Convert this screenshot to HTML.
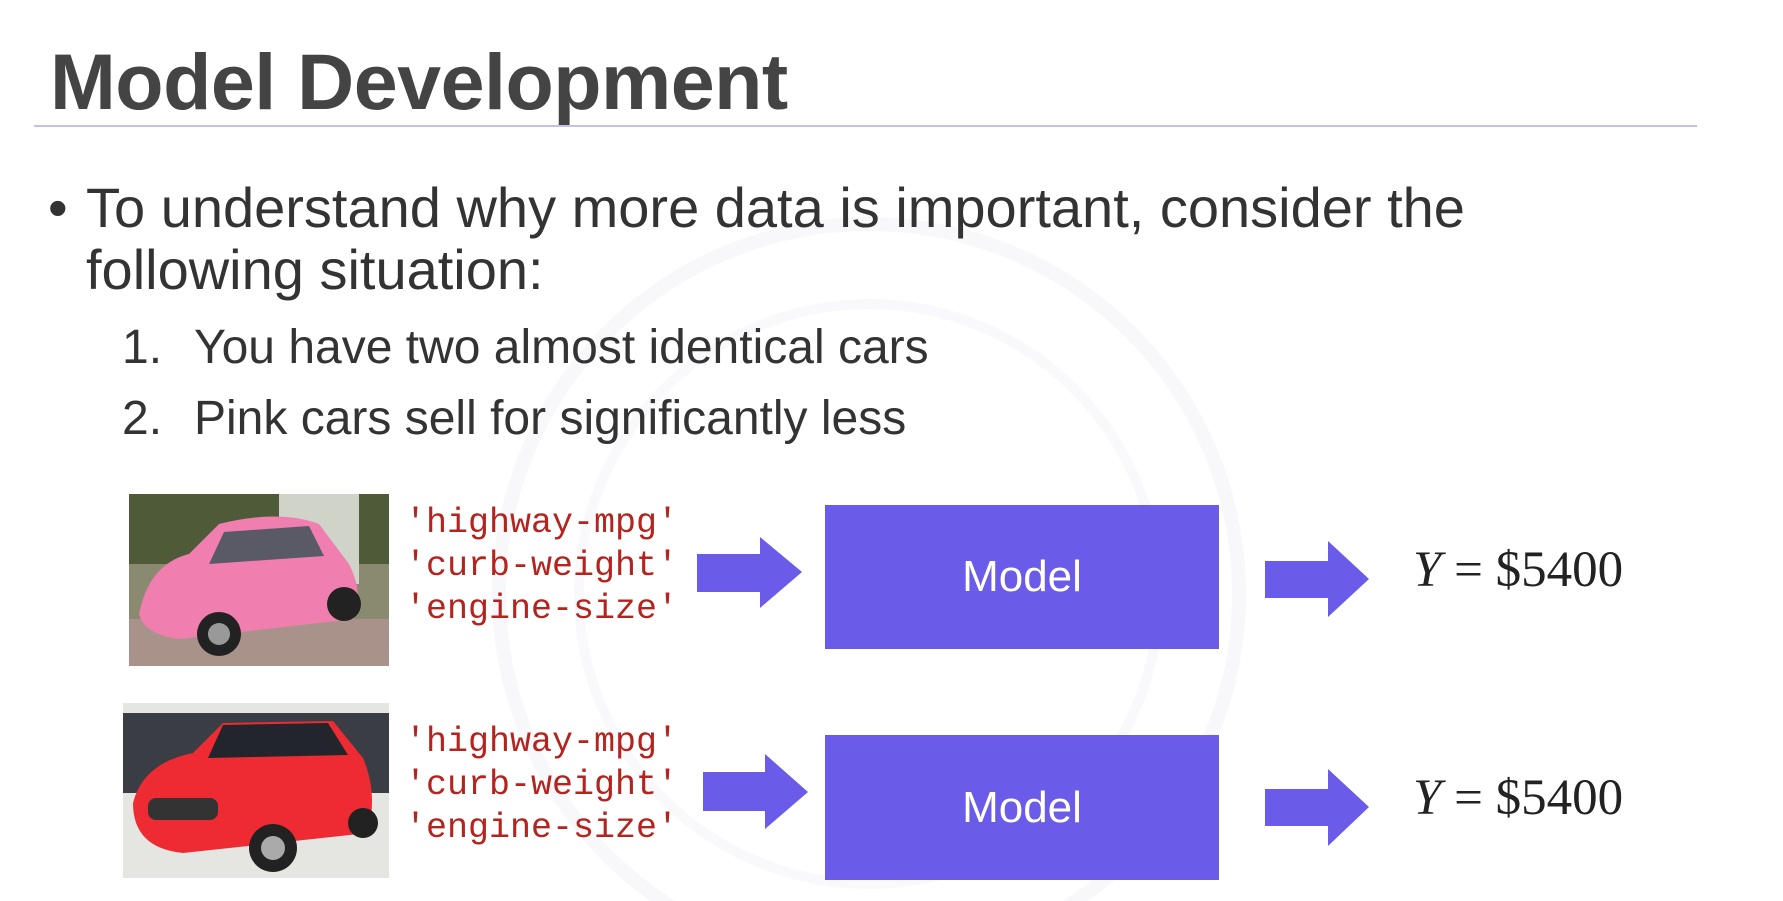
<!DOCTYPE html>
<html><head><meta charset="utf-8"><style>
html,body{margin:0;padding:0;background:#fff;overflow:hidden;}
body{width:1783px;height:901px;position:relative;overflow:hidden;font-family:"Liberation Sans",sans-serif;}
.a{position:absolute;white-space:nowrap;}
.title{left:50px;top:36px;font-size:79px;font-weight:bold;color:#444;letter-spacing:-0.5px;}
.rule{left:34px;top:125px;width:1663px;height:2px;background:#c4c0ee;}
.b{font-size:56px;color:#333;}
.li{font-size:48px;color:#333;}
.mono{font-family:"Liberation Mono",monospace;font-size:35px;color:#b5231f;line-height:43px;}
.box{background:#6a5be9;color:#fff;font-size:44px;display:flex;align-items:center;justify-content:center;}
.y{font-family:"Liberation Serif",serif;font-size:51px;color:#222;}
</style></head><body>
<svg class="a" style="left:0;top:0" width="1783" height="901">
<circle cx="869" cy="594" r="370" fill="none" stroke="#f8f8fa" stroke-width="14"/>
<circle cx="869" cy="594" r="290" fill="none" stroke="#f9f9fb" stroke-width="10"/>
</svg>
<div class="a title">Model Development</div>
<div class="a rule"></div>
<div class="a b" style="left:48px;top:175px;">•</div>
<div class="a b" style="left:86px;top:175px;">To understand why more data is important, consider the</div>
<div class="a b" style="left:86px;top:237px;">following situation:</div>
<div class="a li" style="left:122px;top:320px;">1.</div>
<div class="a li" style="left:194px;top:320px;">You have two almost identical cars</div>
<div class="a li" style="left:122px;top:391px;">2.</div>
<div class="a li" style="left:194px;top:391px;">Pink cars sell for significantly less</div>

<svg class="a" style="left:129px;top:494px" width="260" height="172" viewBox="0 0 260 172">
<rect width="260" height="172" fill="#8a8a70"/>
<rect width="260" height="70" fill="#4f5a38"/>
<rect x="150" width="80" height="90" fill="#cfd3c8"/>
<rect y="125" width="260" height="47" fill="#a8928a"/>
<path d="M10 120 Q20 70 60 60 L90 30 Q150 15 190 30 L220 70 Q235 100 225 125 L50 145 Q15 140 10 120Z" fill="#f07fb0"/>
<path d="M95 38 L180 32 L195 62 L80 70Z" fill="#5a5a66"/>
<circle cx="90" cy="140" r="22" fill="#222"/><circle cx="90" cy="140" r="11" fill="#999"/>
<circle cx="215" cy="110" r="17" fill="#222"/>
</svg>
<svg class="a" style="left:123px;top:703px" width="266" height="175" viewBox="0 0 266 175">
<rect width="266" height="175" fill="#e5e5e2"/>
<rect y="10" width="266" height="80" fill="#3a3d44"/>
<path d="M10 100 Q20 60 70 50 L100 20 L210 18 L240 55 Q255 90 245 130 L60 150 Q10 145 10 100Z" fill="#ee2b32"/>
<path d="M100 22 L205 20 L225 52 L85 55Z" fill="#23252c"/>
<rect x="25" y="95" width="70" height="22" rx="8" fill="#333"/>
<circle cx="150" cy="145" r="24" fill="#222"/><circle cx="150" cy="145" r="12" fill="#aaa"/>
<circle cx="240" cy="120" r="15" fill="#222"/>
</svg>

<div class="a mono" style="left:405px;top:502px;">'highway-mpg'<br>'curb-weight'<br>'engine-size'</div>
<div class="a mono" style="left:405px;top:721px;">'highway-mpg'<br>'curb-weight'<br>'engine-size'</div>

<svg class="a" style="left:0;top:0" width="1783" height="901">
<g fill="#6a5be9">
<polygon points="697,554 760,554 760,537 802,572 760,608 760,592 697,592"/>
<polygon points="703,772 765,772 765,754 808,792 765,829 765,811 703,811"/>
<polygon points="1265,561 1328,561 1328,541 1369,579 1328,617 1328,598 1265,598"/>
<polygon points="1265,789 1328,789 1328,769 1369,807 1328,846 1328,826 1265,826"/>
</g></svg>
<div class="a box" style="left:825px;top:505px;width:394px;height:144px;">Model</div>
<div class="a box" style="left:825px;top:735px;width:394px;height:145px;">Model</div>
<div class="a y" style="left:1413px;top:541px;"><i>Y</i> = $5400</div>
<div class="a y" style="left:1413px;top:769px;"><i>Y</i> = $5400</div>
</body></html>
